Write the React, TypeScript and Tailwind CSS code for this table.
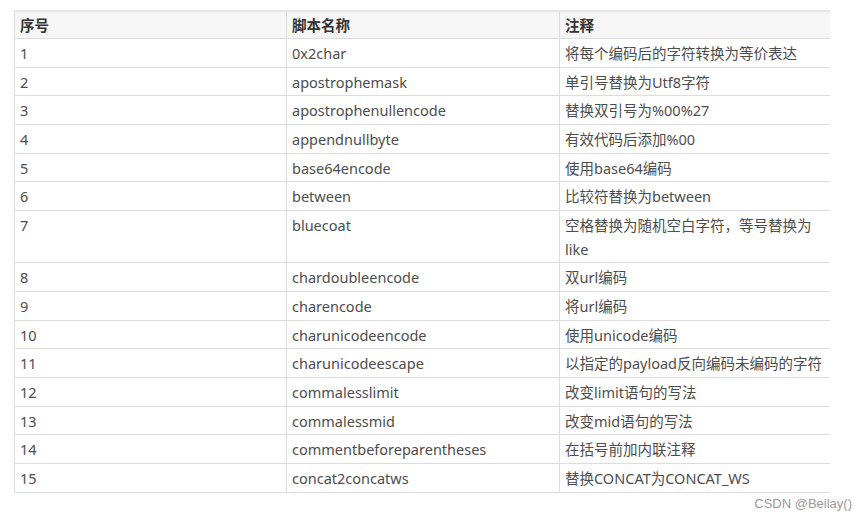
const rows: [string, string, React.ReactNode, boolean?][] = [
  ["1", "0x2char", "将每个编码后的字符转换为等价表达"],
  ["2", "apostrophemask", "单引号替换为Utf8字符"],
  ["3", "apostrophenullencode", "替换双引号为%00%27"],
  ["4", "appendnullbyte", "有效代码后添加%00"],
  ["5", "base64encode", "使用base64编码"],
  ["6", "between", "比较符替换为between"],
  [
    "7",
    "bluecoat",
    <>
      空格替换为随机空白字符，等号替换为
      <br />
      like
    </>,
    true,
  ],
  ["8", "chardoubleencode", "双url编码"],
  ["9", "charencode", "将url编码"],
  ["10", "charunicodeencode", "使用unicode编码"],
  ["11", "charunicodeescape", "以指定的payload反向编码未编码的字符"],
  ["12", "commalesslimit", "改变limit语句的写法"],
  ["13", "commalessmid", "改变mid语句的写法"],
  ["14", "commentbeforeparentheses", "在括号前加内联注释"],
  ["15", "concat2concatws", "替换CONCAT为CONCAT_WS"],
];

const cell = "border-l border-[#dddddd] pl-[5px] pr-[2px] py-[2px] whitespace-nowrap";

export default function App() {
  return (
    <main
      className="min-h-screen w-[867px] h-[521px] bg-white pt-[10px] pl-[14px] text-[14.5px] text-[#4d4d4d]"
      style={{ fontFamily: '"Noto Sans", "Noto Sans CJK SC", sans-serif' }}
    >
      <div className="w-[816px] border-t-2 border-[#e5e5e5]">
        <div className="flex h-[27px] items-center border-b border-[#dddddd] bg-[#f6f6f6] font-bold text-[#333333] leading-[24px]">
          <div className={`${cell} w-[272px]`}>序号</div>
          <div className={`${cell} w-[273px]`}>脚本名称</div>
          <div className={`${cell} w-[271px]`}>注释</div>
        </div>
        {rows.map(([n, name, note, tall]) => (
          <div
            key={n}
            className={`flex border-b border-[#dddddd] leading-[24px] ${tall ? "h-[52px]" : "h-[28.7px]"}`}
          >
            <div className={`${cell} w-[272px]`}>{n}</div>
            <div className={`${cell} w-[273px]`}>{name}</div>
            <div className={`${cell} w-[271px]`}>{note}</div>
          </div>
        ))}
      </div>
      <div
        className="mt-[2px] w-[838px] text-right text-[13px] leading-[18px] text-[#999999]"
        style={{ fontFamily: '"Liberation Sans", Arial, sans-serif' }}
      >
        CSDN @Beilay()
      </div>
    </main>
  );
}
